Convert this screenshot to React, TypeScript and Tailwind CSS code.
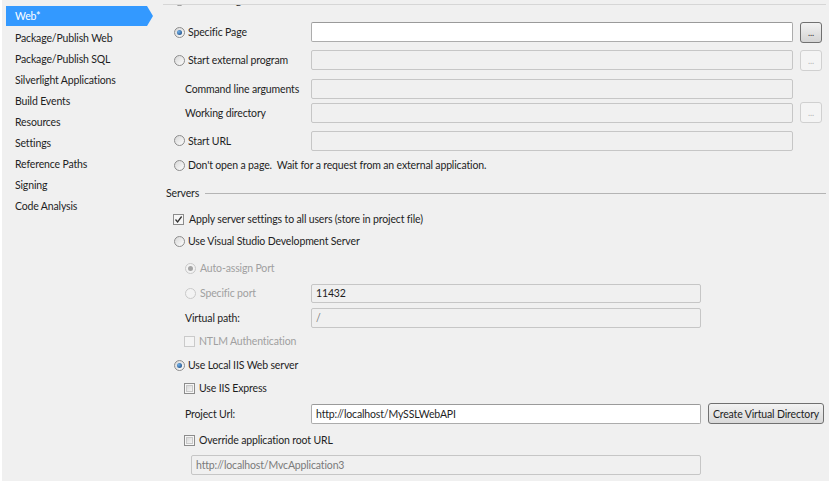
import React from "react";

const sideItems = [
  "Package/Publish Web",
  "Package/Publish SQL",
  "Silverlight Applications",
  "Build Events",
  "Resources",
  "Settings",
  "Reference Paths",
  "Signing",
  "Code Analysis",
];

// text nudged down a pixel so Lato sits where Segoe UI did
function T({ children, className = "" }: { children: React.ReactNode; className?: string }) {
  return <span className={`pt-[2px] ${className}`}>{children}</span>;
}

function Radio({ checked = false, disabled = false }: { checked?: boolean; disabled?: boolean }) {
  return (
    <span
      className={`flex h-[11px] w-[11px] shrink-0 items-center justify-center rounded-full border ${
        disabled ? "border-[#c9c9c9] bg-[#f3f3f3]" : "border-[#8c8c8c] bg-gradient-to-br from-[#d8d8d8] to-[#fdfdfd]"
      }`}
    >
      {checked && (
        <span
          className={`h-[5px] w-[5px] rounded-full ${
            disabled ? "bg-[#a5a5a5]" : "bg-[radial-gradient(circle_at_35%_35%,#6fb0ea,#143f75)]"
          }`}
        />
      )}
    </span>
  );
}

function Check({ checked = false, disabled = false }: { checked?: boolean; disabled?: boolean }) {
  return (
    <span
      className={`flex h-[11px] w-[11px] shrink-0 items-center justify-center border ${
        disabled ? "border-[#cacaca] bg-[#f4f4f4]" : "border-[#8c8c8c] bg-[#f6f6f6]"
      }`}
    >
      {checked ? (
        <svg viewBox="0 0 9 9" className="h-[9px] w-[9px]">
          <path d="M1.5 4.5 L3.6 7 L7.6 1.5" fill="none" stroke="#333" strokeWidth="1.3" />
        </svg>
      ) : (
        !disabled && <span className="h-[7px] w-[7px] border border-[#c8c8c8] bg-gradient-to-br from-[#d9d9d9] to-[#f4f4f4]" />
      )}
    </span>
  );
}

function Field({
  w,
  value = "",
  enabled = false,
  muted = false,
  h = "h-[20px]",
}: {
  w: string;
  value?: string;
  enabled?: boolean;
  muted?: boolean;
  h?: string;
}) {
  return (
    <div
      className={`${w} ${h} flex shrink-0 items-center rounded-[2px] border px-[4px] ${
        enabled ? "border-[#acacac] border-t-[#9a9a9a] bg-white" : "border-[#c6c6c6] bg-[#f0f0f0]"
      } ${muted ? "text-[#7a7a7a]" : "text-[#1e1e1e]"}`}
    >
      <T>{value}</T>
    </div>
  );
}

function Dots({ enabled = false }: { enabled?: boolean }) {
  return (
    <div
      className={`ml-[7px] flex h-[21px] w-[22px] shrink-0 items-end justify-center rounded-[3px] border pb-[5px] text-[9px] leading-none ${
        enabled
          ? "border-[#707070] bg-gradient-to-b from-[#f2f2f2] to-[#d4d4d4] text-[#333]"
          : "border-[#d0d0d0] bg-[#f4f4f4] text-[#b5b5b5]"
      }`}
    >
      ...
    </div>
  );
}

export default function App() {
  return (
    <div className="flex h-[483px] w-[829px] border-b-2 border-l-2 border-white bg-[#f0f0f0] font-['Lato',sans-serif] text-[10.5px] tracking-[-0.15px] text-[#1e1e1e]">
      <aside className="w-[161px] shrink-0 pt-[6px]">
        <div className="ml-[4px] flex h-[20px] w-[147px] items-center bg-[#3399ff] pl-[9px] text-white [clip-path:polygon(0_0,141px_0,100%_50%,141px_100%,0_100%)]">
          <T>Web*</T>
        </div>
        {sideItems.map((s, i) => (
          <div key={s} className={`flex h-[21px] items-center pl-[13px] ${i === 0 ? "mt-[1px]" : ""}`}>
            <T>{s}</T>
          </div>
        ))}
      </aside>

      <main className="flex w-[666px] flex-col">
        {/* row scrolled off the top of the panel */}
        <div className="mt-[4px] h-[8px] w-[663px] overflow-hidden border-t border-[#d6d6d6]">
          <div className="-mt-[13px] flex h-[16px] items-center gap-[3px] pl-[11px]">
            <Radio />
            <T>Current Page</T>
          </div>
        </div>

        <div className="mt-[8px] flex h-[24px] items-center">
          <div className="flex w-[148px] items-center gap-[3px] pl-[11px]">
            <Radio checked />
            <T>Specific Page</T>
          </div>
          <Field w="w-[482px]" enabled />
          <Dots enabled />
        </div>

        <div className="mt-[4px] flex h-[24px] items-center">
          <div className="flex w-[148px] items-center gap-[3px] pl-[11px]">
            <Radio />
            <T>Start external program</T>
          </div>
          <Field w="w-[482px]" />
          <Dots />
        </div>

        <div className="mt-[6px] flex h-[21px] items-center">
          <T className="w-[148px] pl-[22px]">Command line arguments</T>
          <Field w="w-[482px]" />
        </div>

        <div className="mt-[3px] flex h-[21px] items-center">
          <T className="w-[148px] pl-[22px]">Working directory</T>
          <Field w="w-[482px]" />
          <Dots />
        </div>

        <div className="mt-[7px] flex h-[21px] items-center">
          <div className="flex w-[148px] items-center gap-[3px] pl-[11px]">
            <Radio />
            <T>Start URL</T>
          </div>
          <Field w="w-[482px]" />
        </div>

        <div className="mt-[4px] flex h-[20px] items-center gap-[3px] pl-[11px]">
          <Radio />
          <T className="whitespace-pre">Don't open a page.  Wait for a request from an external application.</T>
        </div>

        <div className="mt-[8px] flex h-[20px] items-center pl-[3px]">
          <T>Servers</T>
          <div className="ml-[6px] mr-[3px] mt-[1px] h-px flex-1 bg-[#b4b4b4]" />
        </div>

        <div className="mt-[6px] flex h-[20px] items-center gap-[5px] pl-[10px]">
          <Check checked />
          <T>Apply server settings to all users (store in project file)</T>
        </div>

        <div className="mt-[2px] flex h-[20px] items-center gap-[3px] pl-[11px]">
          <Radio />
          <T>Use Visual Studio Development Server</T>
        </div>

        <div className="mt-[7px] flex h-[20px] items-center gap-[4px] pl-[22px] text-[#a0a0a0]">
          <Radio checked disabled />
          <T>Auto-assign Port</T>
        </div>

        <div className="mt-[5px] flex h-[20px] items-center">
          <div className="flex w-[148px] items-center gap-[4px] pl-[22px] text-[#a0a0a0]">
            <Radio disabled />
            <T>Specific port</T>
          </div>
          <Field w="w-[390px]" h="h-[19px]" value="11432" />
        </div>

        <div className="mt-[4px] flex h-[21px] items-center">
          <T className="w-[148px] pl-[22px]">Virtual path:</T>
          <Field w="w-[390px]" value="/" muted />
        </div>

        <div className="mt-[3px] flex h-[20px] items-center gap-[4px] pl-[21px] text-[#a0a0a0]">
          <Check disabled />
          <T>NTLM Authentication</T>
        </div>

        <div className="mt-[4px] flex h-[20px] items-center gap-[3px] pl-[11px]">
          <Radio checked />
          <T>Use Local IIS Web server</T>
        </div>

        <div className="mt-[3px] flex h-[20px] items-center gap-[4px] pl-[21px]">
          <Check />
          <T>Use IIS Express</T>
        </div>

        <div className="mt-[5px] flex h-[21px] items-center">
          <T className="w-[148px] pl-[22px]">Project Url:</T>
          <Field w="w-[390px]" value="http://localhost/MySSLWebAPI" enabled />
          <div className="ml-[7px] flex h-[21px] w-[116px] items-center justify-center rounded-[3px] border border-[#707070] bg-gradient-to-b from-[#f3f3f3] to-[#d9d9d9]">
            <T>Create Virtual Directory</T>
          </div>
        </div>

        <div className="mt-[6px] flex h-[20px] items-center gap-[4px] pl-[21px]">
          <Check />
          <T>Override application root URL</T>
        </div>

        <div className="mt-[4px] flex h-[21px] items-center pl-[28px]">
          <Field w="w-[510px]" h="h-[20px]" value="http://localhost/MvcApplication3" muted />
        </div>
      </main>
    </div>
  );
}
